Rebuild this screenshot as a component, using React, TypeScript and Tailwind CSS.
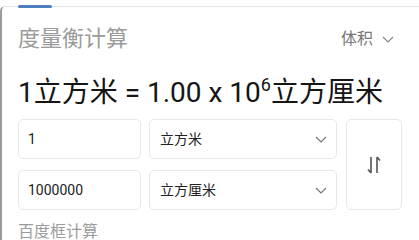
import React from "react";

const font = { fontFamily: "Roboto, 'Noto Sans CJK SC', sans-serif" };

function Chevron({ className = "" }: { className?: string }) {
  return (
    <svg className={className} width="12" height="7" viewBox="0 0 12 7" fill="none">
      <path d="M1 1l5 5 5-5" stroke="currentColor" strokeWidth="1.2" />
    </svg>
  );
}

function SwapIcon() {
  return (
    <svg width="14" height="18" viewBox="0 0 14 18" fill="none" stroke="#555" strokeWidth="1.6">
      <path d="M4 1v16M4 17l-3-3.5" />
      <path d="M10 17V1M10 1l3 3.5" />
    </svg>
  );
}

export default function App() {
  return (
    <div className="w-[419px] h-[240px] bg-white overflow-hidden pt-[6px]" style={font}>
      <div className="relative h-[300px] border-t border-t-[#e4e4e4] border-l-2 border-l-[#9a9a9a] rounded-tl-[5px] pl-[16px] pr-[17px] pt-[18px]">
        <div className="absolute left-[16px] top-[-2px] w-[34px] h-[3px] bg-[#4f7fc0] rounded-full" />

        <div className="flex items-center justify-between">
          <span className="text-[22px] leading-[28px] text-[#9b9b9b]">度量衡计算</span>
          <span className="flex items-center gap-[9px] pr-[8px] text-[16px] leading-[20px] text-[#777]">
            体积
            <Chevron className="text-[#888]" />
          </span>
        </div>

        <div className="mt-[22px] text-[28px] leading-[36px] text-[#151515] whitespace-nowrap">
          1立方米 = 1.00 x 10<sup className="text-[18px] relative top-[-11px] align-baseline">6</sup>立方厘米
        </div>

        <div className="mt-[8px] flex gap-[9px]">
          <div className="flex flex-col gap-[11px]">
            <div className="flex gap-[8px]">
              <div className="w-[123px] h-[40px] border border-[#e8e8e8] rounded-[5px] flex items-center pl-[9px] text-[14px] text-[#222]">1</div>
              <div className="w-[188px] h-[40px] border border-[#e8e8e8] rounded-[5px] flex items-center justify-between pl-[10px] pr-[9px] text-[14px] text-[#222]">
                立方米
                <Chevron className="text-[#777]" />
              </div>
            </div>
            <div className="flex gap-[8px]">
              <div className="w-[123px] h-[40px] border border-[#e8e8e8] rounded-[5px] flex items-center pl-[9px] text-[14px] text-[#222]">1000000</div>
              <div className="w-[188px] h-[40px] border border-[#e8e8e8] rounded-[5px] flex items-center justify-between pl-[10px] pr-[9px] text-[14px] text-[#222]">
                立方厘米
                <Chevron className="text-[#777]" />
              </div>
            </div>
          </div>
          <div className="w-[57px] border border-[#e8e8e8] rounded-[5px] flex items-center justify-center">
            <SwapIcon />
          </div>
        </div>

        <div className="mt-[11px] text-[16px] leading-[22px] text-[#9b9b9b]">百度框计算</div>
      </div>
    </div>
  );
}
